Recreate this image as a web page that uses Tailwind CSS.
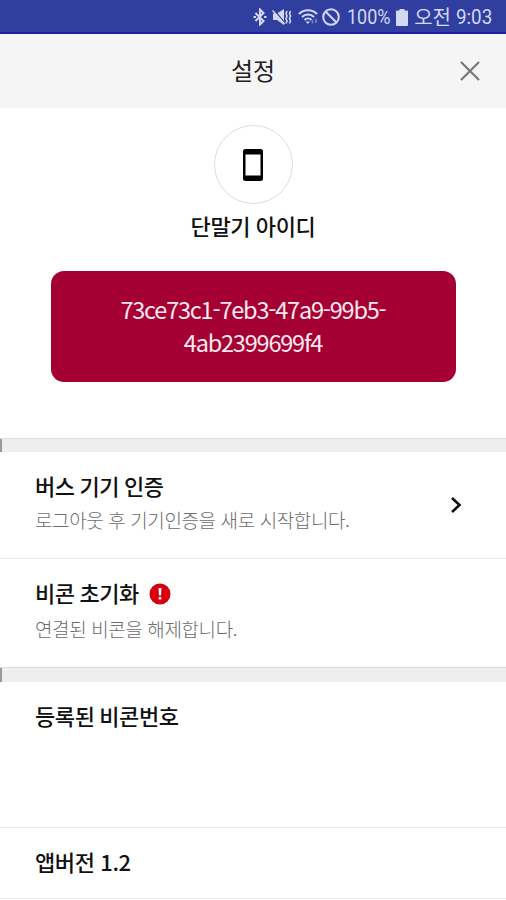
<!DOCTYPE html>
<html lang="ko">
<head>
    <meta charset="UTF-8">
    <meta name="viewport" content="width=device-width, initial-scale=1.0">
    <title>설정</title>
    <script src="https://cdn.jsdelivr.net/npm/@tailwindcss/browser@4"></script>
</head>
<body class="bg-white font-['Noto_Sans_CJK_KR',sans-serif] text-[#111]">
    <div class="w-[506px] h-[900px] overflow-hidden flex flex-col">
        <!-- Status bar -->
        <div class="h-[34px] shrink-0 bg-[#303f9f] border-b-2 border-[#1c209a] pt-[2px] flex items-center justify-end pr-[13px] text-[#d3d8f3] whitespace-nowrap">
            <svg class="w-[14px] h-[18px] mr-[5px]" viewBox="0 0 14 18" fill="none" stroke="currentColor" stroke-width="2">
                <path d="M2.500 5l8 8L7 16.500v-15L10.500 5l-8 8"/>
                <path d="M.5 9h2.500M11 9h2.500"/>
            </svg>
            <svg class="w-[20px] h-[18px] mr-[6px]" viewBox="0 0 20 18">
                <path d="M1 5.500h4l7-4.500v16l-7-5H1z" fill="currentColor"/>
                <path d="M2 2l11 13" stroke="#303f9f" stroke-width="1.300"/>
                <path d="M.5 2.500l12 13.500" stroke="currentColor" stroke-width="1.500"/>
                <path d="M15 3l-1 2.500 1 2.500-1 2.500 1 2.500-1 2.500M18.500 3l-1 2.500 1 2.500-1 2.500 1 2.500-1 2.500" fill="none" stroke="currentColor" stroke-width="1.600"/>
            </svg>
            <svg class="w-[20px] h-[18px] mr-[4px]" viewBox="0 0 20 18" fill="none" stroke="currentColor" stroke-width="2">
                <path d="M1 6c5-5 13-5 18 0M4 9c3.500-3.500 8.500-3.500 12 0M6.500 12c2-2 5-2 7 0"/>
                <path d="M7.500 13.500h4.500L9.800 16z" fill="currentColor" stroke="none"/>
                <path d="M14.500 15.500v-3.500M18 11v4" stroke-width="1.800" opacity=".4"/>
            </svg>
            <svg class="w-[18px] h-[18px] mr-[7px]" viewBox="0 0 18 18" fill="none" stroke="currentColor" stroke-width="2">
                <circle cx="9" cy="9" r="7.800"/>
                <path d="M3.500 3.500l11 11"/>
            </svg>
            <span class="w-[43px] text-[20px] leading-none font-[Roboto,sans-serif]"><span class="inline-block origin-left scale-x-[.9]">100%</span></span>
            <svg class="w-[12px] h-[17px] ml-[6px] mr-[6px]" viewBox="0 0 12 17" fill="currentColor">
                <path d="M3.500 0h5v1.500H11a1 1 0 0 1 1 1v13.500a1 1 0 0 1-1 1H1a1 1 0 0 1-1-1V2.500a1 1 0 0 1 1-1h2.500z"/>
            </svg>
            <span class="text-[20px] leading-none mr-[5px]">오전</span>
            <span class="w-[37px] text-[20px] leading-none font-[Roboto,sans-serif]"><span class="inline-block origin-left scale-x-[.94]">9:03</span></span>
        </div>

        <!-- Header -->
        <header class="h-[74px] shrink-0 bg-[#f5f5f5] grid grid-cols-[1fr_auto_1fr] items-center">
            <h1 class="col-start-2 pb-[2px] text-[24px] leading-none text-[#222]">설정</h1>
            <svg class="justify-self-end mr-[26px] w-[20px] h-[20px]" viewBox="0 0 20 20" stroke="#777" stroke-width="2.200">
                <path d="M1 1l18 18M19 1L1 19"/>
            </svg>
        </header>

        <!-- Device id -->
        <section class="h-[330px] shrink-0 flex flex-col items-center pt-[17px]">
            <div class="w-[79px] h-[79px] rounded-full border border-[#dcdcdc] flex items-center justify-center">
                <svg class="w-[20px] h-[32px] mt-[1px]" viewBox="0 0 20 32">
                    <path fill="#000" fill-rule="evenodd" d="M2.500 0h15A2.500 2.500 0 0 1 20 2.500v27a2.500 2.500 0 0 1-2.500 2.500h-15A2.500 2.500 0 0 1 0 29.500v-27A2.500 2.500 0 0 1 2.500 0zM2.500 5.500v21h15v-21z"/>
                </svg>
            </div>
            <h2 class="mt-[5px] text-[22px] leading-[32px] font-medium tracking-[-.4px]">단말기 아이디</h2>
            <div class="mt-[30px] w-[405px] h-[111px] pb-[1px] rounded-[13px] bg-[#a50034] flex items-center justify-center text-center text-[23.500px] leading-[33px] tracking-[-1.200px] text-[#fbe9ee]">
                <p>73ce73c1-7eb3-47a9-99b5-<br>4ab2399699f4</p>
            </div>
        </section>

        <!-- Settings list -->
        <div class="h-[14px] shrink-0 bg-[#eee] border-t border-[#ddd] flex"><span class="w-[2px] bg-[#999]"></span></div>
        <div class="h-[107px] shrink-0 border-b border-[#eaeaea] pl-[35px] pr-[44px] flex items-center justify-between">
            <div class="pb-[5px]">
                <h3 class="text-[22px] leading-[34px] font-medium tracking-[-.4px] [word-spacing:-1px]">버스 기기 인증</h3>
                <p class="text-[19px] leading-[35px] font-light tracking-[-.4px] text-[#6c6c6c]">로그아웃 후 기기인증을 새로 시작합니다.</p>
            </div>
            <svg class="w-[12px] h-[18px]" viewBox="0 0 12 18" fill="none" stroke="#111" stroke-width="2.600">
                <path d="M2 2l7.500 7L2 16"/>
            </svg>
        </div>
        <div class="h-[108px] shrink-0 pl-[35px] pb-[5px] flex flex-col justify-center">
            <h3 class="text-[22px] leading-[36px] font-medium tracking-[-.4px] [word-spacing:-1px] flex items-center gap-[10px]">비콘 초기화
                <svg class="w-[22px] h-[22px] mt-[3px]" viewBox="0 0 22 22">
                    <circle cx="11" cy="11" r="10.500" fill="#d9000d"/>
                    <path d="M9.500 5h3l-.5 7.500h-2zM9.700 14h2.600v2.500H9.700z" fill="#fff"/>
                </svg>
            </h3>
            <p class="text-[19px] leading-[37px] font-light tracking-[-.4px] text-[#6c6c6c]">연결된 비콘을 해제합니다.</p>
        </div>
        <div class="h-[15px] shrink-0 bg-[#eee] border-t border-[#ddd] flex"><span class="w-[2px] bg-[#999]"></span></div>
        <div class="h-[146px] shrink-0 border-b border-[#eaeaea] pl-[35px] pt-[16px]">
            <h3 class="text-[22px] leading-[34px] font-medium tracking-[-.4px] [word-spacing:-1px]">등록된 비콘번호</h3>
        </div>
        <div class="h-[71px] shrink-0 border-b border-[#eaeaea] pl-[35px] pb-[4px] flex items-center">
            <h3 class="text-[22px] leading-[34px] font-medium tracking-[-.4px]">앱버전 1.2</h3>
        </div>
    </div>
</body>
</html>
